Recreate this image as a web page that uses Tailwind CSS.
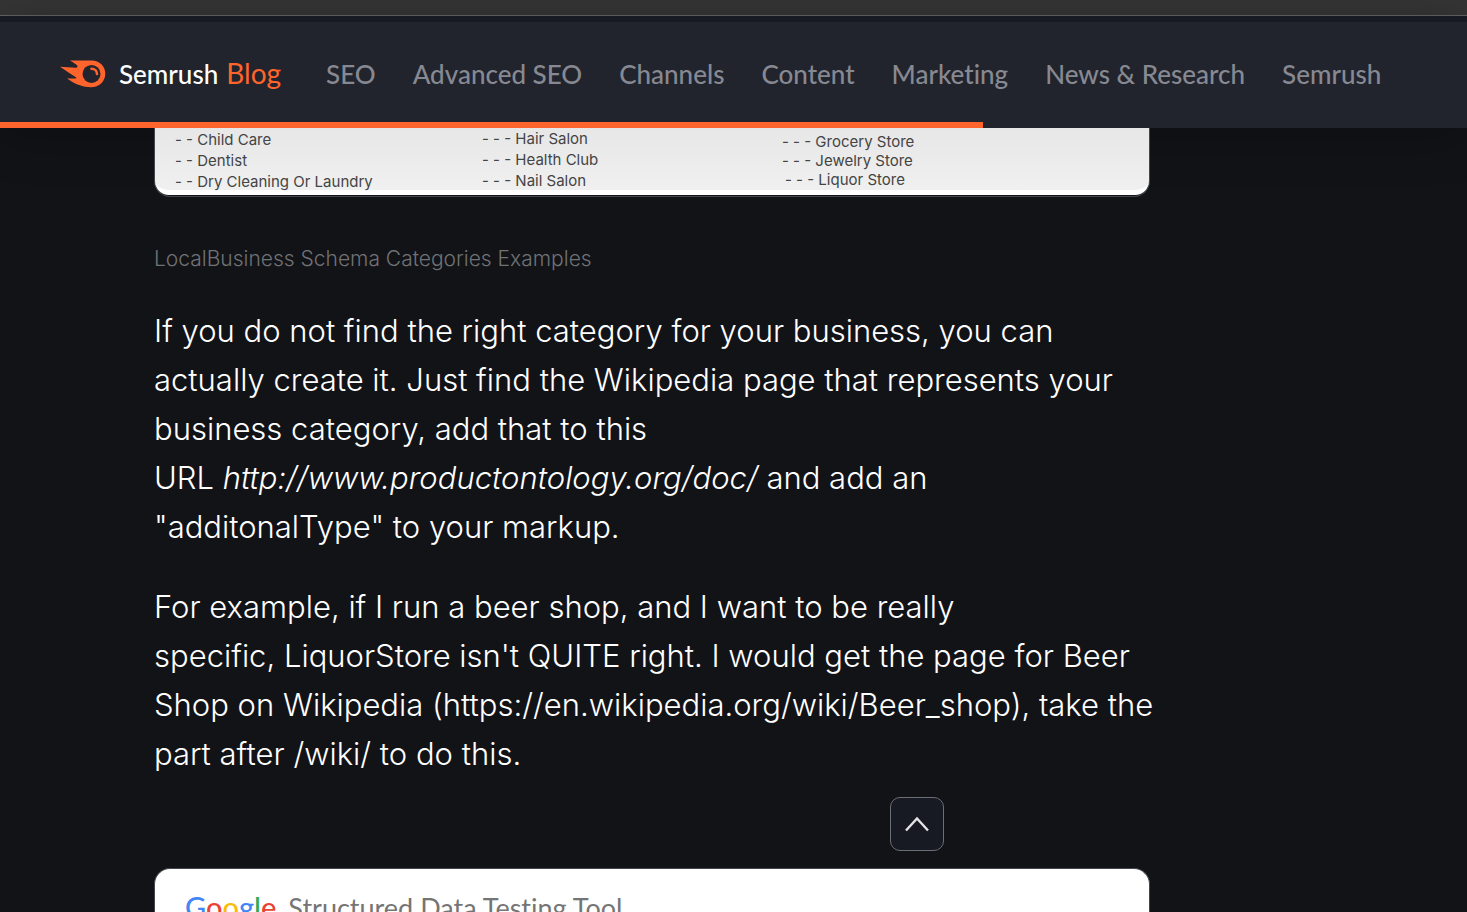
<!DOCTYPE html>
<html lang="en">
<head>
<meta charset="utf-8">
<meta name="viewport" content="width=device-width, initial-scale=1">
<title>Semrush Blog</title>
<script src="https://cdn.jsdelivr.net/npm/@tailwindcss/browser@4"></script>
</head>
<body class="bg-[#121317] font-['Inter',sans-serif] text-white">
<div class="flex h-screen flex-col overflow-hidden">
  <div class="h-4 shrink-0 border-b border-[#636363] bg-[#353535]"></div>
  <header class="relative z-10 shrink-0 border-t-6 border-[#171a22] bg-[#21242c] shadow-[0_8px_48px_rgba(0,0,0,0.25)]">
    <div class="flex h-[100px] items-center gap-[45px] pt-1 pl-[60px] font-['Lato',sans-serif] [font-variant-ligatures:none]">
      <a href="#" class="flex items-center">
        <svg class="mr-[13px] h-7 w-[46px]" viewBox="0 0 46 28" fill="none" aria-hidden="true">
          <path fill="#ff642d" d="M10 0.500H31.500C39.500 0.500 45.300 6 45.300 13.700S39 27.200 31 27.200C23 27.200 15.500 24.500 7 18.500H15.500C16.500 18.500 16.600 17.700 15.600 17.100C11 14 5.500 10.500 0 6.800C5 7.100 10.500 7.700 15.500 7.800C18 7.800 18 6 16.500 4.800C14.500 3.300 12 1.800 10 0.500Z"/>
          <circle cx="31.500" cy="13.900" r="9" fill="#21242c"/>
          <path d="M31.500 8.700C34.600 8.700 37 11 37 14" stroke="#ff642d" stroke-width="2.600" stroke-linecap="round"/>
        </svg>
        <span class="mr-2 text-[26px] leading-8 font-medium">Semrush</span>
        <span class="pb-[2px] text-[28px] leading-8 text-[#ff642d]">Blog</span>
      </a>
      <nav class="flex items-center gap-[37px] text-[26px] leading-8 font-medium whitespace-nowrap text-[#878992]" aria-label="Blog sections">
        <a href="#">SEO</a>
        <a href="#">Advanced SEO</a>
        <a href="#">Channels</a>
        <a href="#">Content</a>
        <a href="#">Marketing</a>
        <a href="#">News &amp; Research</a>
        <a href="#">Semrush</a>
      </nav>
    </div>
    <div class="h-[6px]"><div class="h-full bg-[#ff642d]" style="width:67%"></div></div>
  </header>

  <main class="mx-auto flex w-full max-w-[1467px] grow flex-col pr-[317px] pl-[154px]">
    <figure>
      <div class="relative z-20 rounded-b-2xl border border-t-0 border-[#44474f] bg-[#121317] pb-px">
        <div class="flex h-[67px] rounded-b-[14px] border-b-5 border-white bg-linear-to-b from-[#e7e7e7] to-[#f0f0f0] pl-5 text-[15px] whitespace-nowrap text-[#444444]">
          <ul class="w-[307px] pt-px leading-[21px]"><li>- - Child Care</li><li>- - Dentist</li><li>- - Dry Cleaning Or Laundry</li></ul>
          <ul class="w-[300px] leading-[21px]"><li>- - - Hair Salon</li><li>- - - Health Club</li><li>- - - Nail Salon</li></ul>
          <ul class="pt-1 leading-[19px]"><li>- - - Grocery Store</li><li>- - - Jewelry Store</li><li class="pl-[3px]">- - - Liquor Store</li></ul>
        </div>
      </div>
      <figcaption class="mt-[46px] text-[21px] leading-8 font-light text-[#707276]">LocalBusiness Schema Categories Examples</figcaption>
    </figure>
    <div class="mt-[31px] -mr-3 flex flex-col gap-[31px] text-[31px] leading-[49px] font-light">
      <p>If you do not find the right category for your business, you can actually create it. Just find the Wikipedia page that represents your business category, add that to this URL&nbsp;<i>http://www.productontology.org/doc/</i>&nbsp;and add an "additonalType" to your markup.</p>
      <p>For example, if I run a beer shop, and I want to be really specific,&nbsp;LiquorStore isn't QUITE right. I would get the page for Beer Shop on Wikipedia (https://en.wikipedia.org/wiki/Beer_shop), take the part after /wiki/ to do this.</p>
    </div>
    <figure class="mt-[90px] grow rounded-t-2xl border border-b-0 border-[#44474f] bg-white pt-5 pl-[30px]">
      <div class="flex items-baseline gap-3 font-['Lato',sans-serif] text-[27px] leading-9 whitespace-nowrap text-[#757575] [font-variant-ligatures:none]">
        <span class="text-[29px] font-medium" aria-label="Google"><span class="text-[#4285f4]">G</span><span class="text-[#ea4335]">o</span><span class="text-[#fbbc05]">o</span><span class="text-[#4285f4]">g</span><span class="text-[#34a853]">l</span><span class="text-[#ea4335]">e</span></span>
        <span>Structured Data Testing Tool</span>
      </div>
    </figure>
  </main>
</div>
<button type="button" aria-label="Back to top" class="fixed right-[523px] bottom-[61px] flex size-[54px] items-center justify-center rounded-[10px] border border-[#6c6e75] bg-[#171a22]">
  <svg class="h-4 w-6" viewBox="0 0 24 16" fill="none" stroke="#e4e4e6" stroke-width="2.400" aria-hidden="true"><path d="M1 14.500L12 2.500L23 14.500"/></svg>
</button>
</body>
</html>
